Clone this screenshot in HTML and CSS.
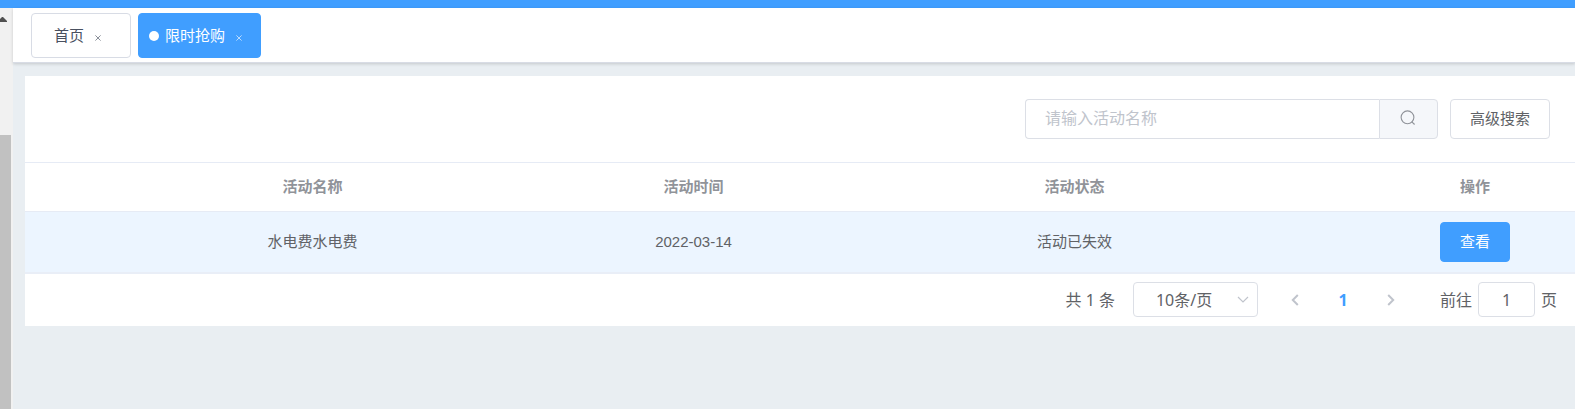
FILE: index.html
```html
<!DOCTYPE html>
<html lang="zh-CN">
<head>
<meta charset="utf-8">
<title>限时抢购</title>
<link rel="stylesheet" href="styles.css">
</head>
<body>
<header class="topbar"></header>
<div class="layout">
  <aside class="rail">
    <svg class="rail-arrow" width="7" height="5" viewBox="0 0 7 5" aria-hidden="true"><path d="M0 2L2 0h1l4 4v1H0z" fill="#505050"/></svg>
    <div class="rail-thumb"></div>
  </aside>
  <main class="main">
    <nav class="tabs">
      <a class="tab" href="#">首页<svg class="tab-close" width="6" height="6" viewBox="0 0 6 6" aria-hidden="true"><path d="M.4.4l5.2 5.2M5.6.4L.4 5.6"/></svg></a>
      <a class="tab tab-active" href="#"><span class="dot"></span>限时抢购<svg class="tab-close" width="6" height="6" viewBox="0 0 6 6" aria-hidden="true"><path d="M.4.4l5.2 5.2M5.6.4L.4 5.6"/></svg></a>
    </nav>
    <section class="panel">
      <form class="search">
        <div class="search-group">
          <input class="search-input" type="text" placeholder="请输入活动名称" aria-label="活动名称">
          <button class="search-btn" type="button" aria-label="搜索">
            <svg width="16" height="16" viewBox="0 0 16 16" fill="none" stroke="#909399" stroke-width="1.1" aria-hidden="true"><circle cx="7.5" cy="7.3" r="6.4"/><path d="M11.6 11.6l3 2.9"/></svg>
          </button>
        </div>
        <button class="btn" type="button">高级搜索</button>
      </form>
      <table class="table">
        <colgroup><col class="col-lead"><col><col><col><col class="col-action"></colgroup>
        <thead>
          <tr><th></th><th>活动名称</th><th>活动时间</th><th>活动状态</th><th class="action">操作</th></tr>
        </thead>
        <tbody>
          <tr><td></td><td>水电费水电费</td><td>2022-03-14</td><td>活动已失效</td><td class="action"><button class="btn btn-primary" type="button">查看</button></td></tr>
        </tbody>
      </table>
      <div class="pager">
        <span class="total">共 1 条</span>
        <div class="size">
          <select class="size-select" aria-label="每页条数"><option>10条/页</option></select>
          <svg class="size-arrow" width="12" height="8" viewBox="0 0 12 8" fill="none" stroke="#c0c4cc" stroke-width="1.2" aria-hidden="true"><path d="M1 1l5 5 5-5"/></svg>
        </div>
        <button class="page" type="button" aria-label="上一页"><svg width="8" height="12" viewBox="0 0 8 12" fill="none" stroke="#c0c4cc" stroke-width="2" aria-hidden="true"><path d="M6.8 1L1.8 6l5 5"/></svg></button>
        <button class="page page-current" type="button">1</button>
        <button class="page" type="button" aria-label="下一页"><svg width="8" height="12" viewBox="0 0 8 12" fill="none" stroke="#c0c4cc" stroke-width="2" aria-hidden="true"><path d="M1.2 1l5 5-5 5"/></svg></button>
        <label class="jump">前往<input class="jump-input" type="text" value="1">页</label>
      </div>
    </section>
  </main>
</div>
</body>
</html>
```
FILE: styles.css
```css
* { box-sizing: border-box; }

body {
  margin: 0;
  min-height: 100vh;
  display: flex;
  flex-direction: column;
  background: #e9eef2;
  color: #606266;
  font: 15px/20px "Liberation Sans", "Noto Sans CJK SC", sans-serif;
}

button, input, select { font: inherit; color: inherit; margin: 0; }
button { cursor: pointer; }

.topbar { height: 8px; background: #409eff; }
.layout { flex: 1; display: flex; }

.rail {
  width: 13px;
  padding: 9px 2px 0 0;
  display: flex;
  flex-direction: column;
  gap: 113px;
  background: #f1f1f1;
}
.rail-arrow { flex: none; display: block; }
.rail-thumb { flex: 1; background: #c1c1c1; }

.main { flex: 1; min-width: 0; }

.tabs {
  display: flex;
  gap: 7px;
  padding: 5px 18px 4px;
  background: #fff;
  border-bottom: 1px solid #d8dce5;
  box-shadow: 0 1px 3px rgba(0, 0, 0, 0.16);
}
.tab {
  height: 45px;
  display: flex;
  align-items: center;
  padding: 1px 28px 0 22px;
  border: 1px solid #d8dce5;
  border-radius: 4px;
  color: #495060;
  text-decoration: none;
}
.tab-active {
  padding: 1px 17px 0 10px;
  border-color: #409eff;
  background: #409eff;
  color: #fff;
}
.dot {
  width: 10px;
  height: 10px;
  margin-right: 6px;
  border-radius: 50%;
  background: #fff;
}
.tab-close {
  margin: 4px 0 0 11px;
  margin-right: 1px;
  fill: none;
  stroke: currentColor;
  stroke-width: 0.8;
  opacity: 0.8;
}

.panel { margin: 13px 0 0 12px; background: #fff; }

.search {
  display: flex;
  justify-content: flex-end;
  gap: 12px;
  padding: 23px 25px;
}
.search-group { display: flex; width: 413px; height: 40px; }
.search-input {
  flex: 1;
  min-width: 0;
  padding: 0 19px;
  border: 1px solid #dcdfe6;
  border-right: 0;
  border-radius: 4px 0 0 4px;
  background: #fff;
  font-size: 16px;
}
.search-input::placeholder { color: #c0c4cc; opacity: 1; }
.search-btn {
  width: 59px;
  display: flex;
  align-items: center;
  justify-content: center;
  padding: 0 0 2px;
  border: 1px solid #dcdfe6;
  border-radius: 0 4px 4px 0;
  background: #f5f7fa;
}
.btn {
  height: 40px;
  padding: 0 19px;
  border: 1px solid #dcdfe6;
  border-radius: 4px;
  background: #fff;
}
.btn-primary { border-color: #409eff; background: #409eff; color: #fff; }

.table {
  width: 100%;
  table-layout: fixed;
  border-collapse: separate;
  border-spacing: 0;
  border-top: 1px solid #e6ebf5;
  text-align: center;
}
.col-lead { width: 97px; }
.col-action { width: 310px; }
.table th {
  height: 49px;
  padding: 0;
  border-bottom: 1px solid #e6ebf5;
  color: #909399;
  font-weight: bold;
}
.table td {
  height: 62px;
  padding: 0;
  border-bottom: 2px solid #e9eef7;
  background: #ecf5ff;
}
.table .action { padding-left: 110px; }

.pager {
  display: flex;
  align-items: center;
  justify-content: flex-end;
  padding: 8px 18px 9px;
  font: 16px/20px "Noto Sans", "Noto Sans CJK SC", sans-serif;
}
.total { margin-right: 18px; }
.size { position: relative; margin-right: 13px; }
.size-select {
  display: block;
  width: 125px;
  height: 35px;
  padding: 0 22px;
  border: 1px solid #dcdfe6;
  border-radius: 4px;
  background: #fff;
  appearance: none;
}
.size-arrow { position: absolute; right: 9px; top: 14px; pointer-events: none; }
.page {
  width: 48px;
  height: 35px;
  display: flex;
  align-items: center;
  justify-content: center;
  padding: 0;
  border: 0;
  background: none;
}
.page-current { color: #409eff; font-weight: bold; }
.jump { display: flex; align-items: center; gap: 6px; margin-left: 25px; }
.jump-input {
  width: 57px;
  height: 35px;
  padding: 0 3px;
  border: 1px solid #dcdfe6;
  border-radius: 4px;
  background: #fff;
  text-align: center;
}
```
